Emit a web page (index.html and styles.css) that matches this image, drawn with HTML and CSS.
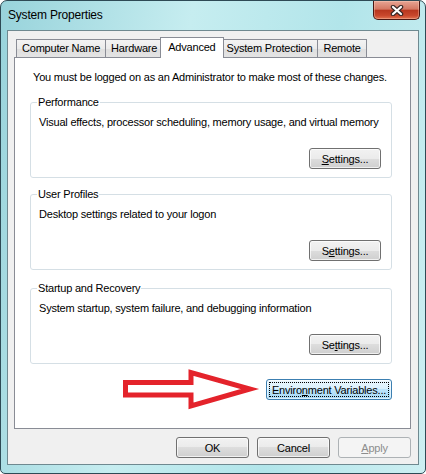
FILE: index.html
```html
<!DOCTYPE html>
<html lang="en">

<head>
    <meta charset="UTF-8">
    <meta name="viewport" content="width=device-width, initial-scale=1.0">
    <title>System Properties</title>
    <link rel="stylesheet" href="styles.css">
</head>

<body>
    <div class="window">
        <div class="titlebar">
            <span class="title">System Properties</span>
            <button class="close-btn" aria-label="Close">
                <svg width="14" height="11" viewBox="0 0 14 11">
                    <path d="M3 2 L11 9 M11 2 L3 9" stroke="#3b2a28" stroke-width="4.5" stroke-linecap="round" />
                    <path d="M3 2 L11 9 M11 2 L3 9" stroke="#fff" stroke-width="2.2" stroke-linecap="round" />
                </svg>
            </button>
        </div>

        <div class="client">
            <div class="tabs">
                <div class="tab">Computer Name</div>
                <div class="tab">Hardware</div>
                <div class="tab active">Advanced</div>
                <div class="tab">System Protection</div>
                <div class="tab">Remote</div>
            </div>

            <div class="panel">
                <p class="notice">You must be logged on as an Administrator to make most of these changes.</p>

                <fieldset class="group">
                    <legend>Performance</legend>
                    <p class="desc">Visual effects, processor scheduling, memory usage, and virtual memory</p>
                    <div class="group-actions">
                        <button class="btn"><u>S</u>ettings...</button>
                    </div>
                </fieldset>

                <fieldset class="group">
                    <legend>User Profiles</legend>
                    <p class="desc">Desktop settings related to your logon</p>
                    <div class="group-actions">
                        <button class="btn">S<u>e</u>ttings...</button>
                    </div>
                </fieldset>

                <fieldset class="group">
                    <legend>Startup and Recovery</legend>
                    <p class="desc">System startup, system failure, and debugging information</p>
                    <div class="group-actions">
                        <button class="btn">Se<u>t</u>tings...</button>
                    </div>
                </fieldset>

                <div class="env-row">
                    <svg class="arrow" width="137" height="41" viewBox="0 0 137 41">
                        <polygon points="2.5,13.5 68,13.5 68,3.5 127,20 68,37 68,26 2.5,26" fill="none"
                            stroke="#e4232b" stroke-width="5" stroke-linejoin="miter" />
                    </svg>
                    <button class="btn btn-default"><span class="focus">Enviro<u>n</u>ment Variables...</span></button>
                </div>
            </div>

            <div class="footer">
                <button class="btn">OK</button>
                <button class="btn">Cancel</button>
                <button class="btn" disabled><u>A</u>pply</button>
            </div>
        </div>
    </div>
</body>

</html>
```

FILE: styles.css
```css
body {
    margin: 0;
    font-family: 'Liberation Sans', Arial, sans-serif;
    font-size: 11px;
    letter-spacing: -0.2px;
    color: #000;
    background: #fff;
}

.window {
    width: 426px;
    height: 474px;
    box-sizing: border-box;
    border: 1px solid #2e4a55;
    border-radius: 7px 7px 5px 5px;
    background: linear-gradient(100deg, #98d3db 0%, #c6edf0 38%, #b2e5ea 68%, #cdeff2 100%);
    display: flex;
    flex-direction: column;
    overflow: hidden;
}

.titlebar {
    height: 29px;
    display: flex;
    align-items: flex-start;
}

.title {
    padding: 7px 0 0 7px;
    line-height: 15px;
    font-size: 12px;
}

.close-btn {
    margin-left: auto;
    margin-right: 5px;
    width: 47px;
    height: 19px;
    padding: 0;
    border: 1px solid #4a1712;
    border-top: none;
    border-radius: 0 0 5px 5px;
    background: linear-gradient(#e7a594, #d47863 45%, #b8371f 52%, #c8472c 80%, #e2714f);
    box-shadow: inset 0 0 0 1px rgba(255, 220, 200, 0.35);
    display: flex;
    align-items: center;
    justify-content: center;
}

.client {
    margin: 0 6px;
    height: 435px;
    box-sizing: border-box;
    border: 1px solid #6f8990;
    background: #f0f0f0;
    display: flex;
    flex-direction: column;
}

.tabs {
    display: flex;
    align-items: flex-end;
    padding: 6px 0 0 8px;
}

.tab {
    height: 17px;
    line-height: 17px;
    padding: 0 5px;
    border: 1px solid #898c95;
    border-bottom: none;
    margin-left: -1px;
    background: linear-gradient(#f3f3f3, #ebebeb 50%, #dedede 50%, #e4e4e4);
    white-space: nowrap;
}

.tab:first-child {
    margin-left: 0;
}

.tab.active {
    height: 20px;
    line-height: 18px;
    margin: 0 -2px -1px -3px;
    padding: 0 7px;
    background: #fff;
    position: relative;
    z-index: 1;
}

.panel {
    margin: 0 7px 0 6px;
    height: 372px;
    box-sizing: border-box;
    border: 1px solid #898c95;
    background: #fff;
    padding: 12px 0 0 15px;
}

.notice {
    margin: 0 0 0 3px;
    line-height: 15px;
}

.group {
    margin: 9px 0 0 0;
    width: 362px;
    box-sizing: border-box;
    border: 1px solid #d5dfe5;
    border-radius: 3px;
    padding: 5px 10px 8px 8px;
}

.panel .notice + .group {
    margin-top: 10px;
}

.panel .group:last-of-type {
    margin-top: 11px;
}

.group legend {
    padding: 0 1px;
    margin-left: -2px;
    line-height: 15px;
}

.desc {
    margin: 0;
    line-height: 15px;
    white-space: nowrap;
}

.group-actions {
    display: flex;
    justify-content: flex-end;
    margin-top: 18px;
}

.btn {
    width: 72px;
    height: 21px;
    padding: 0;
    font-family: inherit;
    font-size: 11px;
    letter-spacing: -0.2px;
    color: #000;
    border: 1px solid #707070;
    border-radius: 3px;
    background: linear-gradient(#f2f2f2, #ebebeb 50%, #dddddd 50%, #cfcfcf);
    box-shadow: inset 0 0 0 1px rgba(255, 255, 255, 0.7);
    white-space: nowrap;
}

.btn:disabled {
    color: #8d8d8d;
    border-color: #adb2b5;
    background: #f4f4f4;
    box-shadow: none;
}

.env-row {
    display: flex;
    align-items: center;
    justify-content: flex-end;
    gap: 6px;
    margin-top: 5px;
    padding-right: 18px;
}

.arrow {
    display: block;
}

.btn-default {
    width: 126px;
    border-color: #3c7fb1;
    background: linear-gradient(#eaf6fd, #d9f0fc 50%, #bee6fd 50%, #a7d9f5);
    box-shadow: inset 0 0 0 1px rgba(255, 255, 255, 0.6);
    padding: 2px;
}

.btn-default .focus {
    display: block;
    height: 100%;
    box-sizing: border-box;
    border: 1px dotted #000;
    line-height: 14px;
}

.footer {
    display: flex;
    justify-content: flex-end;
    gap: 8px;
    margin-top: 8px;
    padding-right: 7px;
}

.footer .btn {
    width: 73px;
}
```
